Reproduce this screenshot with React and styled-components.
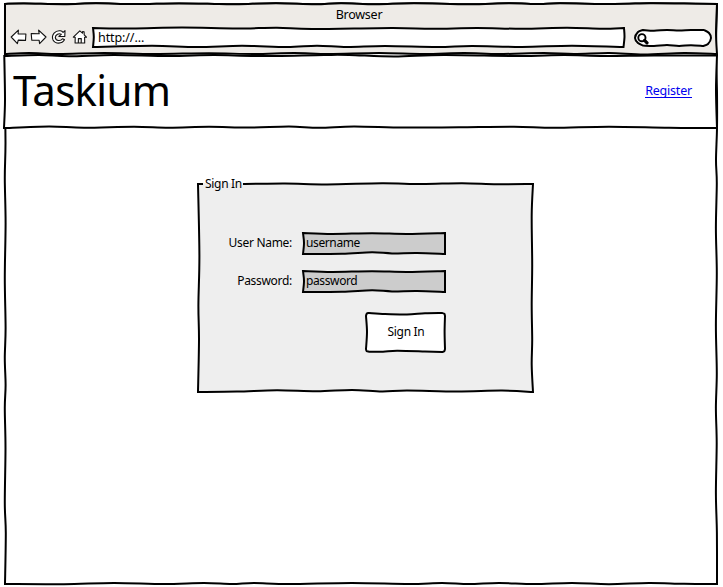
import React from "react";
import styled, { createGlobalStyle } from "styled-components";

const GlobalStyle = createGlobalStyle`
  * { box-sizing: border-box; }
  body {
    margin: 0;
    background: #fff;
    color: #000;
    font: 12.5px/16px "Noto Sans", "Open Sans", sans-serif;
  }
`;

/* Smooth curve through a list of points, for the hand-drawn outlines. */
const curve = (points) =>
  points.slice(1).reduce((d, p, i) => {
    const a = points[i];
    const before = points[i - 1] || a;
    const after = points[i + 2] || p;
    const c1 = [a[0] + (p[0] - before[0]) / 6, a[1] + (p[1] - before[1]) / 6];
    const c2 = [p[0] - (after[0] - a[0]) / 6, p[1] - (after[1] - a[1]) / 6];
    return `${d} C${c1} ${c2} ${p}`;
  }, "");

const outline = (edges) =>
  `M${edges[0][0]}` + edges.map((e) => curve(e)).join(" ") + " Z";

const Backdrop = styled.svg`
  position: absolute;
  inset: 0;
  width: 100%;
  height: 100%;
  overflow: visible;
  pointer-events: none;
  z-index: -1;
`;

const Sketch = ({ edges, fill = "#fff" }) => (
  <Backdrop aria-hidden="true">
    <path d={outline(edges)} fill={fill} stroke="#000" strokeWidth="2" />
  </Backdrop>
);

const framed = `
  position: relative;
  isolation: isolate;
`;

const Window = styled.main`
  ${framed}
  display: flex;
  flex-direction: column;
  width: 713px;
  height: 583px;
  margin: 3px 0 0 4px;
`;

const Chrome = styled.div`
  ${framed}
  height: 52px;
  padding: 4px 0 0 7px;
`;

const Title = styled.div`
  height: 20px;
  margin-right: 10px;
  text-align: center;
  letter-spacing: -0.25px;
`;

const Toolbar = styled.div`
  display: flex;
  align-items: center;
  height: 21px;
`;

const IconButton = styled.button`
  display: flex;
  flex: none;
  width: 16px;
  height: 16px;
  margin: -1px ${(p) => p.$gap || 4}px 0 0;
  padding: 0;
  border: 0;
  background: none;
`;

const Address = styled.div`
  ${framed}
  flex: none;
  width: 533px;
  height: 21px;
  padding: 3px 6px 0;
  letter-spacing: -0.1px;
`;

const Search = styled.div`
  ${framed}
  display: flex;
  flex: none;
  align-items: center;
  width: 79px;
  height: 18px;
  margin: 1px 0 0 8px;
  padding: 1px 0 0 4px;
`;

const Header = styled.header`
  ${framed}
  display: flex;
  align-items: center;
  justify-content: space-between;
  height: 74px;
  padding: 0 25px 0 9px;
`;

const Brand = styled.h1`
  margin: -4px 0 0;
  font-size: 42px;
  font-weight: 400;
  line-height: 72px;
  letter-spacing: -0.7px;
`;

const RegisterLink = styled.a`
  color: #0000ee;
  height: 15px;
  line-height: 15px;
  margin-top: -3px;
  letter-spacing: -0.2px;
  text-decoration: none;
  border-bottom: 1px solid #0000ee;
`;

const Content = styled.section`
  flex: 1;
  padding: 46px 0 0 193px;
`;

const Panel = styled.form`
  ${framed}
  width: 337px;
  height: 218px;
  font-size: 12px;
  letter-spacing: -0.3px;
`;

const Legend = styled.div`
  width: 40px;
  height: 17px;
  margin-left: 6px;
  padding: 1px 0 0 2px;
  background: linear-gradient(#fff 0 8px, #eee 8px);
  white-space: nowrap;
`;

const Fields = styled.div`
  display: grid;
  grid-template-columns: 95px 144px;
  grid-auto-rows: 23px;
  column-gap: 10px;
  row-gap: 15px;
  padding-top: 40px;
`;

const Label = styled.label`
  line-height: 21px;
  text-align: right;
  white-space: nowrap;
`;

const Field = styled.div`
  ${framed}
  padding-left: 4px;
  line-height: 21px;
  letter-spacing: -0.38px;
`;

const SignIn = styled.button`
  ${framed}
  display: block;
  width: 81px;
  height: 41px;
  margin: 19px 0 0 168px;
  padding: 0 0 1px 1px;
  border: 0;
  background: none;
  color: inherit;
  font: inherit;
  letter-spacing: inherit;
`;

const windowEdges = [
  [[1, 1], [20, 0.5], [60, 1.2], [92, 0.3], [130, 1], [175, 0.4], [215, 1], [235, 1.2], [272, 0.2], [311, 1.2], [337, 0.2], [372, 1.2], [410, 0.2], [465, 1.2], [505, 0.2], [535, 1], [556, 0.3], [610, 1], [646, 0.3], [680, 0.6], [713, 1]],
  [[713, 1], [712, 45], [713, 90], [713, 125], [712, 157], [712.8, 180], [711.9, 225], [712.8, 270], [711.9, 323], [712.8, 370], [711.9, 405], [712.7, 440], [711.9, 490], [712.9, 530], [713, 581]],
  [[713, 581], [680, 580.8], [645, 580], [605, 581.2], [568, 580], [530, 581.1], [495, 580], [465, 581.1], [438, 580], [405, 581.1], [348, 580], [285, 581.1], [250, 580], [228, 581.1], [200, 580], [160, 581.1], [110, 580], [60, 581.2], [1, 581]],
  [[1, 581], [1.8, 530], [0.8, 500], [1.5, 445], [0.8, 405], [1.6, 382], [0.8, 355], [1.6, 325], [0.8, 275], [1.6, 220], [0.8, 175], [1.5, 140], [1, 80], [1, 1]],
];

const chromeEdges = [
  windowEdges[0],
  [[713, 1], [712, 30], [713, 51]],
  [[713, 51], [680, 50], [640, 51.4], [605, 50], [570, 51], [540, 50], [495, 51], [460, 50], [420, 51], [375, 50], [325, 51], [290, 50], [250, 51], [205, 50.2], [150, 51], [100, 50], [55, 51], [25, 50], [1, 51]],
  [[1, 51], [1, 1]],
];

const headerEdges = [
  [[1, 1], [35, 0], [65, 1.2], [110, 0], [165, 1], [210, 0], [255, 1], [320, 0], [345, 0], [390, 1.5], [440, 0], [515, 1], [560, 0], [600, 1], [650, 0.4], [713, 0.5]],
  [[713, 0.5], [712, 35], [713, 73]],
  [[713, 73], [665, 72.8], [605, 71.7], [550, 72.8], [510, 71.7], [455, 72.2], [400, 72.6], [350, 71.5], [315, 72.8], [285, 71.5], [245, 72.6], [205, 71.8], [165, 72.7], [130, 71.7], [80, 72.7], [45, 71.5], [0, 73]],
  [[0, 73], [1, 45], [0.3, 1]],
];

const addressEdges = [
  [[1, 1], [40, 1.5], [90, 0.6], [145, 1.5], [185, 0.7], [220, 2], [300, 1], [340, 1.8], [385, 1], [430, 1.8], [475, 0.8], [510, 1.8], [532, 1]],
  [[532, 1], [532.5, 10], [531.5, 20]],
  [[531.5, 20], [480, 18.7], [430, 20], [380, 19], [345, 20], [293, 19], [255, 20], [225, 18.7], [195, 20], [150, 18.8], [105, 20], [60, 18.8], [1, 20]],
  [[1, 20], [1.8, 10], [1, 1]],
];

const panelEdges = [
  [[1, 9], [45, 9], [88, 8.5], [130, 9.4], [185, 8.3], [225, 9], [265, 8.2], [300, 9.2], [336, 9]],
  [[336, 9], [334.7, 40], [335.2, 90], [334.7, 130], [335.2, 165], [334.7, 190], [336, 217]],
  [[336, 217], [305, 215.6], [260, 216.5], [210, 215.5], [185, 216.5], [155, 215], [120, 216.3], [80, 215.3], [40, 216.6], [1, 217]],
  [[1, 217], [2, 165], [1.4, 130], [2.4, 80], [1, 9]],
];

const fieldEdges = [
  [[1, 1], [30, 2], [70, 1.2], [105, 2], [143, 1]],
  [[143, 1], [143, 22]],
  [[143, 22], [115, 21], [90, 21.4], [70, 20.3], [40, 21.7], [1, 22]],
  [[1, 22], [2, 11], [1, 1]],
];

const searchEdges = [
  [[10, 1], [21, 1.7], [34, 1], [46, 1.5], [58, 1], [71, 1]],
  [[71, 1], [76, 4], [78, 9], [75, 15], [70, 17]],
  [[70, 17], [58, 16.2], [46, 17], [34, 16], [21, 17], [10, 16.5]],
  [[10, 16.5], [5, 14], [2, 9], [5, 3], [10, 1]],
];

const buttonEdges = [
  [[4, 1], [20, 2], [42, 2.4], [60, 1.3], [77, 1]],
  [[77, 1], [79.3, 1.8], [80, 4]],
  [[80, 4], [79.6, 20], [80, 37]],
  [[80, 37], [79.2, 39.3], [77, 40]],
  [[77, 40], [60, 39.4], [32, 38.7], [18, 39.7], [4, 39.7]],
  [[4, 39.7], [1.6, 39], [1, 37]],
  [[1, 37], [2, 20], [1, 4]],
  [[1, 4], [1.7, 1.7], [4, 1]],
];

const iconPaths = {
  back: "M.2 8 7.4 1.1 7.1 4.9 14.9 5 14.5 11.4 7.2 11.1 6.4 14.6Z",
  forward: "M15 8 7.6 1.1 8.2 4.8 .2 4.6 .8 11.3 8.1 11.2 8.6 14.7Z",
  reload:
    "M14 1.6 13.8 7.5 7.9 7.4 10.3 5.3C8 3.8 4.4 5.4 4.3 8.6 4.8 12 9.5 12.5 11.5 9.7L13.5 10.8C11 15.2 4.4 15.1 2 10.9-.1 5.8 4.5 1 9.4 1.8 10.5 2 11.5 2.6 12.1 3.3Z",
  home:
    "M7.8 1.8 1.3 8.2 3.2 8.3 3.1 14 12.7 14 12.6 8.3 14.5 8.2 12.2 5.8 12.1 2.7 10.6 2.6 10.5 4.2Z M6.3 14 6.4 9.6 9.3 9.6 9.2 14",
};

const Icon = ({ name }) => (
  <svg width="16" height="16" viewBox="0 0 16 16" overflow="visible" aria-hidden="true">
    <path d={iconPaths[name]} fill="#fff" stroke="#111" strokeWidth="1.1" strokeLinejoin="round" />
  </svg>
);

const Magnifier = () => (
  <svg width="12" height="12" viewBox="0 0 12 12" aria-hidden="true">
    <circle cx="4.9" cy="4.7" r="3.6" fill="none" stroke="#000" strokeWidth="1.9" />
    <path d="M7.6 7.4 10 9.8" stroke="#000" strokeWidth="3.2" strokeLinecap="round" />
  </svg>
);

export default function App() {
  return (
    <>
      <GlobalStyle />
      <Window>
        <Sketch edges={windowEdges} />
        <Chrome>
          <Sketch edges={chromeEdges} fill="#eeebe7" />
          <Title>Browser</Title>
          <Toolbar>
            <IconButton aria-label="Back"><Icon name="back" /></IconButton>
            <IconButton aria-label="Forward"><Icon name="forward" /></IconButton>
            <IconButton aria-label="Reload" $gap={5}><Icon name="reload" /></IconButton>
            <IconButton aria-label="Home"><Icon name="home" /></IconButton>
            <Address>
              <Sketch edges={addressEdges} />
              http://...
            </Address>
            <Search>
              <Sketch edges={searchEdges} />
              <Magnifier />
            </Search>
          </Toolbar>
        </Chrome>
        <Header>
          <Sketch edges={headerEdges} />
          <Brand>Taskium</Brand>
          <RegisterLink>Register</RegisterLink>
        </Header>
        <Content>
          <Panel>
            <Sketch edges={panelEdges} fill="#eee" />
            <Legend>Sign In</Legend>
            <Fields>
              <Label>User Name:</Label>
              <Field>
                <Sketch edges={fieldEdges} fill="#ccc" />
                username
              </Field>
              <Label>Password:</Label>
              <Field>
                <Sketch edges={fieldEdges} fill="#ccc" />
                password
              </Field>
            </Fields>
            <SignIn type="button">
              <Sketch edges={buttonEdges} />
              Sign In
            </SignIn>
          </Panel>
        </Content>
      </Window>
    </>
  );
}
